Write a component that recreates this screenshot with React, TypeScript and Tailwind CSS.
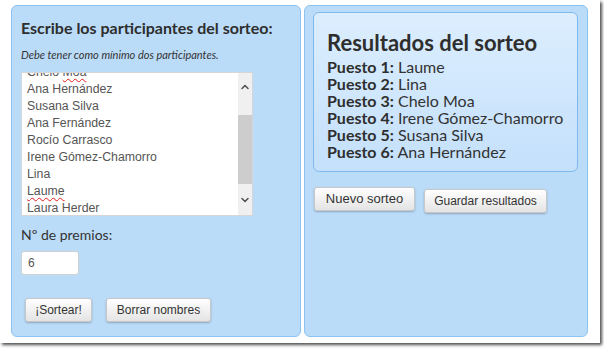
import { ChevronDown, ChevronUp } from "lucide-react";

const participants = [
  "Chelo Moa",
  "Ana Hernández",
  "Susana Silva",
  "Ana Fernández",
  "Rocío Carrasco",
  "Irene Gómez-Chamorro",
  "Lina",
  "Laume",
  "Laura Herder",
];

const misspelled: Record<string, [string, string]> = {
  "Chelo Moa": ["Chelo ", "Moa"],
  Laume: ["", "Laume"],
};

const results = [
  "Laume",
  "Lina",
  "Chelo Moa",
  "Irene Gómez-Chamorro",
  "Susana Silva",
  "Ana Hernández",
];

const btn =
  "h-6 rounded-[3px] border border-[#c8c8c8] bg-gradient-to-b from-white to-[#e4e4e4] shadow-[0_1px_2px_rgba(0,0,0,0.25)] text-[12px] text-[#333] font-['Liberation_Sans',Arial,sans-serif]";

function ParticipantsBox() {
  return (
    <div className="relative mt-[10px] h-[144px] w-[232px] overflow-hidden rounded-[2px] border border-[#d6d6d6] bg-white">
      <div className="-mt-[9px] pl-[5px] font-['Liberation_Sans',Arial,sans-serif] text-[12.3px] leading-[17px] text-[#555]">
        {participants.map((name) => {
          const split = misspelled[name];
          return (
            <div key={name}>
              {split ? (
                <>
                  {split[0]}
                  <span className="underline decoration-wavy decoration-[#e02020] decoration-1 underline-offset-2">
                    {split[1]}
                  </span>
                </>
              ) : (
                name
              )}
            </div>
          );
        })}
      </div>
      {/* scrollbar */}
      <div className="absolute right-0 top-0 flex h-full w-[14px] flex-col bg-[#f0f0f0]">
        <div className="flex h-[20px] items-end justify-center">
          <ChevronUp className="h-[12px] w-[12px] text-[#505050]" strokeWidth={3} />
        </div>
        <div className="mt-[22px] h-[69px] bg-[#cdcdcd]" />
        <div className="flex flex-1 items-center justify-center">
          <ChevronDown className="h-[12px] w-[12px] text-[#505050]" strokeWidth={3} />
        </div>
      </div>
    </div>
  );
}

export default function App() {
  return (
    <div className="h-[349px] w-[604px] bg-white">
      <div className="flex h-[343px] w-[600px] gap-[3px] bg-white pl-[11px] pt-[5px] shadow-[2px_2px_3px_rgba(0,0,0,0.7)] font-['Lato',sans-serif] text-[#333]">
        {/* left panel */}
        <div className="flex h-[332px] w-[290px] flex-col rounded-[6px] border border-[#8cc3f1] bg-[#bbdcf9] pl-[9px] pt-[13px]">
          <h2 className="text-[16px] font-bold leading-[18px] text-[#2e2e2e]">
            Escribe los participantes del sorteo:
          </h2>
          <p className="mt-[11px] text-[11px] italic leading-[14px] text-[#333]">
            Debe tener como mínimo dos participantes.
          </p>
          <ParticipantsBox />
          <label className="mt-[11px] text-[14px] leading-[16px] text-[#333]">
            Nº de premios:
          </label>
          <div className="mt-[8px] flex h-6 w-[58px] items-center rounded-[3px] border border-[#d0d0d0] bg-white pl-[6px] font-['Liberation_Sans',Arial,sans-serif] text-[12px] text-[#555]">
            6
          </div>
          <div className="ml-[4px] mt-[23px] flex gap-[14px]">
            <button className={`${btn} w-[67px]`}>¡Sortear!</button>
            <button className={`${btn} w-[105px]`}>Borrar nombres</button>
          </div>
        </div>

        {/* right panel */}
        <div className="flex h-[332px] w-[284px] flex-col rounded-[6px] border border-[#8cc3f1] bg-[#bbdcf9] pl-[8px] pt-[6px]">
          <div className="h-[160px] w-[265px] rounded-[6px] border border-[#7fbaee] bg-gradient-to-b from-[#dceefe] to-[#c4e0fb] pl-[13px] pt-[18px]">
            <h1 className="text-[22px] font-bold leading-[24px] text-[#2e2e2e]">
              Resultados del sorteo
            </h1>
            <div className="mt-[3px] text-[16px] leading-[17px] text-[#333]">
              {results.map((name, i) => (
                <div key={i}>
                  <span className="font-bold text-[#2e2e2e]">Puesto {i + 1}:</span> {name}
                </div>
              ))}
            </div>
          </div>
          <div className="ml-[1px] mt-[15px] flex items-start gap-[9px]">
            <button className={`${btn} w-[101px] text-[13px]`}>Nuevo sorteo</button>
            <button className={`${btn} mt-[2px] w-[123px]`}>Guardar resultados</button>
          </div>
        </div>
      </div>
    </div>
  );
}
